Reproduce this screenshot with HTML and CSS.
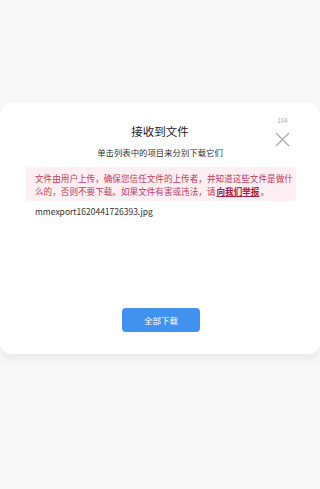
FILE: index.html
```html
<!DOCTYPE html>
<html lang="zh">
<head>
<meta charset="utf-8">
<link rel="stylesheet" href="styles.css">
</head>
<body>
<div class="page">
  <div class="card">
    <div class="close-area">
      <span class="count">104</span>
      <svg class="close" width="15" height="15" viewBox="0 0 15 15"><path d="M1 1L14 14M14 1L1 14" stroke="#a8a8a8" stroke-width="1.2" fill="none"/></svg>
    </div>
    <div class="title">接收到文件</div>
    <div class="subtitle">单击列表中的项目来分别下载它们</div>
    <div class="warn">文件由用户上传，确保您信任文件的上传者，并知道这些文件是做什么的，否则不要下载。如果文件有害或违法，请<a class="report">向我们举报</a>。</div>
    <div class="file">mmexport1620441726393.jpg</div>
    <div class="actions"><button class="btn">全部下载</button></div>
  </div>
</div>
</body>
</html>
```
FILE: styles.css
```css
html, body { margin: 0; padding: 0; }
body {
  background: #f8f8f9;
  font-family: "Noto Sans CJK SC", "Noto Sans", sans-serif;
  width: 320px;
  height: 489px;
  overflow: hidden;
}
.page { padding-top: 103px; }
.card {
  position: relative;
  background: #fff;
  border-radius: 12px;
  height: 251px;
  box-shadow: 0 6px 10px rgba(0,0,0,0.06);
  box-sizing: border-box;
  padding-top: 20px;
}
.close-area {
  position: absolute;
  right: 30px;
  top: 14px;
  display: flex;
  flex-direction: column;
  align-items: center;
}
.count { font-size: 6px; color: #aaa; line-height: 8px; margin-bottom: 7px; }
.close { display: block; }
.title { text-align: center; font-size: 11.5px; color: #222; line-height: 16px; }
.subtitle { text-align: center; font-size: 8.4px; color: #333; line-height: 12px; margin-top: 7px; }
.warn {
  margin: 9px 24px 0 26px;
  background: #fdeff2;
  color: #c23a5e;
  font-size: 8.6px;
  line-height: 13px;
  padding: 5px 2px 3px 9px;
  border-radius: 2px;
}
.report { color: #a8203f; font-weight: 600; text-decoration: underline; margin: 0 1px; }
.file { margin: 4px 0 0 35px; font-size: 8.5px; color: #333; line-height: 12px; }
.actions { display: flex; justify-content: center; margin-top: 91px; padding-left: 2px; }
.btn {
  width: 78px; height: 24px;
  background: #4191ef;
  border: none;
  border-radius: 4px;
  color: #fff;
  font-family: inherit;
  font-size: 8.5px;
  padding: 0;
}
```
